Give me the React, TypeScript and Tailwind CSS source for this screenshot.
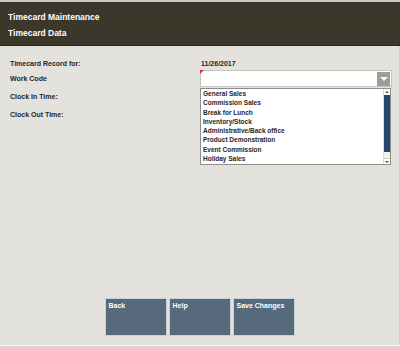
import React from 'react';

const workCodes = [
  'General Sales',
  'Commission Sales',
  'Break for Lunch',
  'Inventory/Stock',
  'Administrative/Back office',
  'Product Demonstration',
  'Event Commission',
  'Holiday Sales',
];

const App = () => {
  return (
    <div className="w-[400px] h-[348px] flex flex-col bg-[#e3e2dd] overflow-hidden font-['Liberation_Sans',Arial,sans-serif] font-bold">
      {/* Header */}
      <div className="h-[2px] bg-[#c8c7c1]" />
      <div className="h-[44px] bg-[#3b372b] border-b border-[#2b2820] px-[8px] pt-[10px] flex flex-col gap-[6px] text-white text-[8.5px] leading-[10px]">
        <div>Timecard Maintenance</div>
        <div>Timecard Data</div>
      </div>

      {/* Body */}
      <div className="flex-1 flex flex-col border-r border-[#d0cfc8]">
        <div className="flex">
          <div className="w-[200px] pl-[10px] pt-[13px] flex flex-col text-[7px] leading-[10px] text-[#262626]">
            <div>Timecard Record for:</div>
            <div className="mt-[5px]">Work Code</div>
            <div className="mt-[8px]">Clock In Time:</div>
            <div className="mt-[8px]">Clock Out Time:</div>
          </div>

          <div className="w-[192px] pt-[13px] flex flex-col text-[7px] leading-[10px] text-[#262626]">
            <div className="pl-[1px]">11/26/2017</div>
            {/* Work code select */}
            <div className="relative mt-[1px] h-[17px] bg-white border border-[#c4c4c0] flex justify-end items-center pr-[1px]">
              <div className="absolute -left-px -top-px w-0 h-0 border-t-[4px] border-r-[4px] border-t-[#e8283a] border-r-transparent" />
              <div className="w-[13px] h-[14px] bg-[#9c9c9c] flex items-center justify-center">
                <div className="w-0 h-0 border-l-[4px] border-r-[4px] border-t-[4px] border-l-transparent border-r-transparent border-t-white" />
              </div>
            </div>
            {/* Open list */}
            <div className="mt-[1px] w-[191px] h-[77px] bg-white border border-[#8e8e8e] flex overflow-hidden">
              <div className="flex-1 pl-[2px] flex flex-col text-[6.5px] leading-[9.3px] text-[#262626]">
                {workCodes.map((code) => (
                  <div key={code}>{code}</div>
                ))}
              </div>
              <div className="w-[7px] flex flex-col bg-[#f2f2f2] border-l border-[#d8d8d8]">
                <div className="h-[6px] flex items-center justify-center bg-white">
                  <div className="w-0 h-0 border-l-[2px] border-r-[2px] border-b-[2px] border-l-transparent border-r-transparent border-b-[#555]" />
                </div>
                <div className="h-[57px] bg-[#26476d]" />
                <div className="flex-1" />
                <div className="h-[6px] flex items-center justify-center bg-white border-t border-[#ccc]">
                  <div className="w-0 h-0 border-l-[2px] border-r-[2px] border-t-[2px] border-l-transparent border-r-transparent border-t-[#555]" />
                </div>
              </div>
            </div>
          </div>
        </div>

        <div className="flex-1" />

        {/* Buttons */}
        <div className="flex justify-center gap-[2px] mb-[9px]">
          {['Back', 'Help', 'Save Changes'].map((label) => (
            <button
              key={label}
              className="w-[62px] h-[38px] bg-[#566a7c] border border-[#c9d0d6] text-white text-[7px] leading-[10px] text-left px-[3px] pt-[2px] flex items-start"
            >
              {label}
            </button>
          ))}
        </div>
      </div>
      <div className="h-[3px] border-t border-[#f3f2ee] bg-[#d8d7ce]" />
    </div>
  );
};

export default App;
